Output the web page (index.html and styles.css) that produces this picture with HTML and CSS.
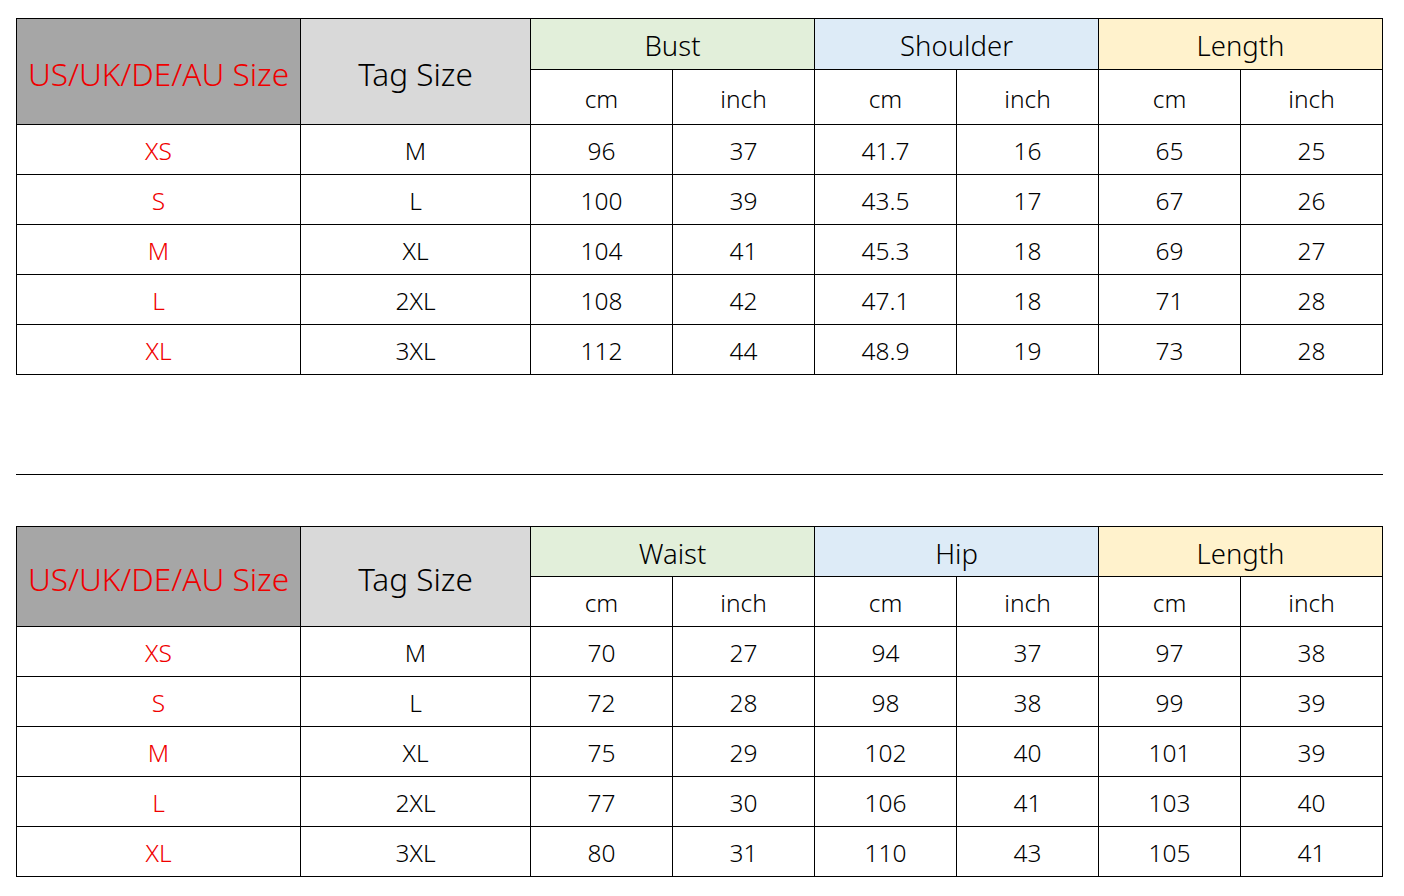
FILE: index.html
```html
<!DOCTYPE html>
<html>
<head>
<meta charset="utf-8">
<link rel="stylesheet" href="styles.css">
</head>
<body>
<div class="page">
  <table class="size-table">
    <colgroup>
      <col class="c-size"><col class="c-tag">
      <col class="c-num"><col class="c-num"><col class="c-num"><col class="c-num"><col class="c-num"><col class="c-num">
    </colgroup>
    <tr class="h1">
      <th rowspan="2" class="size-head">US/UK/DE/AU Size</th>
      <th rowspan="2" class="tag-head">Tag Size</th>
      <th colspan="2" class="green">Bust</th>
      <th colspan="2" class="blue">Shoulder</th>
      <th colspan="2" class="yellow">Length</th>
    </tr>
    <tr class="h2">
      <td>cm</td><td>inch</td><td>cm</td><td>inch</td><td>cm</td><td>inch</td>
    </tr>
    <tr><td class="red">XS</td><td>M</td><td>96</td><td>37</td><td>41.7</td><td>16</td><td>65</td><td>25</td></tr>
    <tr><td class="red">S</td><td>L</td><td>100</td><td>39</td><td>43.5</td><td>17</td><td>67</td><td>26</td></tr>
    <tr><td class="red">M</td><td>XL</td><td>104</td><td>41</td><td>45.3</td><td>18</td><td>69</td><td>27</td></tr>
    <tr><td class="red">L</td><td>2XL</td><td>108</td><td>42</td><td>47.1</td><td>18</td><td>71</td><td>28</td></tr>
    <tr><td class="red">XL</td><td>3XL</td><td>112</td><td>44</td><td>48.9</td><td>19</td><td>73</td><td>28</td></tr>
  </table>

  <div class="divider"></div>

  <table class="size-table second">
    <colgroup>
      <col class="c-size"><col class="c-tag">
      <col class="c-num"><col class="c-num"><col class="c-num"><col class="c-num"><col class="c-num"><col class="c-num">
    </colgroup>
    <tr class="h1">
      <th rowspan="2" class="size-head">US/UK/DE/AU Size</th>
      <th rowspan="2" class="tag-head">Tag Size</th>
      <th colspan="2" class="green">Waist</th>
      <th colspan="2" class="blue">Hip</th>
      <th colspan="2" class="yellow">Length</th>
    </tr>
    <tr class="h2">
      <td>cm</td><td>inch</td><td>cm</td><td>inch</td><td>cm</td><td>inch</td>
    </tr>
    <tr><td class="red">XS</td><td>M</td><td>70</td><td>27</td><td>94</td><td>37</td><td>97</td><td>38</td></tr>
    <tr><td class="red">S</td><td>L</td><td>72</td><td>28</td><td>98</td><td>38</td><td>99</td><td>39</td></tr>
    <tr><td class="red">M</td><td>XL</td><td>75</td><td>29</td><td>102</td><td>40</td><td>101</td><td>39</td></tr>
    <tr><td class="red">L</td><td>2XL</td><td>77</td><td>30</td><td>106</td><td>41</td><td>103</td><td>40</td></tr>
    <tr><td class="red">XL</td><td>3XL</td><td>80</td><td>31</td><td>110</td><td>43</td><td>105</td><td>41</td></tr>
  </table>
</div>
</body>
</html>
```

FILE: styles.css
```css
* { box-sizing: border-box; }
html, body { margin: 0; padding: 0; background: #fff; }
body { font-family: "Noto Sans", "Open Sans", sans-serif; color: #000; }
.page {
  padding: 18px 0 0 16px;
  width: 1404px;
}
.size-table {
  border-collapse: collapse;
  table-layout: fixed;
  width: 1367px;
}
.c-size { width: 284px; }
.c-tag { width: 230px; }
.c-num { width: 142px; }
.size-table th,
.size-table td {
  border: 1px solid #000;
  padding: 3px 0 0 0;
  text-align: center;
  vertical-align: middle;
  font-weight: 300;
  font-size: 24.5px;
  line-height: 1;
  height: 50px;
}
.size-table th { font-size: 27.5px; padding-top: 4px; }
.size-table .h1 th { height: 51px; }
.size-table .h2 td { height: 55px; padding-top: 4px; }
.second .h1 th { height: 50px; }
.second .h2 td { height: 50px; }
.size-table th.size-head {
  background: #a6a6a6;
  color: #f00000;
  font-size: 31.6px;
}
.size-table th.tag-head {
  background: #d9d9d9;
  font-size: 31.5px;
}
.green { background: #e2efda; }
.blue { background: #ddebf7; }
.yellow { background: #fff2cc; }
.red { color: #f00000; }
.divider {
  width: 1367px;
  height: 1px;
  background: #000;
  margin-top: 99px;
  margin-bottom: 51px;
}
```
